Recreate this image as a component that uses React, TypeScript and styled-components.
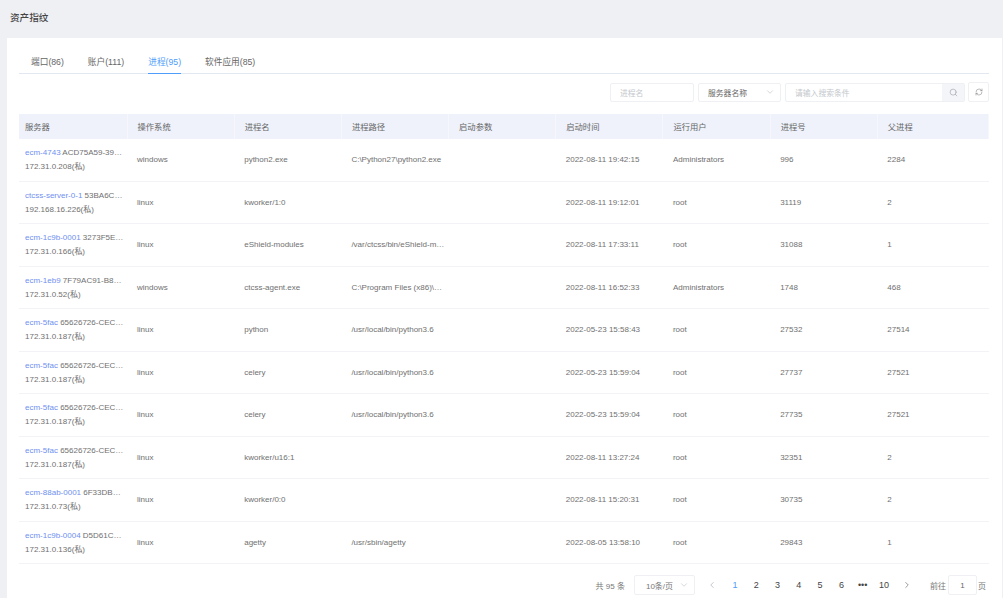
import styled, { createGlobalStyle } from 'styled-components'
import { ChevronDown, ChevronLeft, ChevronRight, RefreshCw, Search } from 'lucide-react'

const GlobalStyle = createGlobalStyle`
  html, body {
    margin: 0;
    height: 100%;
    overflow: hidden;
    background: #eff0f4;
  }
  * {
    box-sizing: border-box;
  }
  body {
    font-family: "Liberation Sans", "Noto Sans CJK SC", sans-serif;
    font-size: 8px;
    color: #666;
  }
`

const Page = styled.div`
  height: 598px;
  display: flex;
  flex-direction: column;
  padding: 0 1px 0 7px;
`

const PageTitle = styled.h1`
  height: 38px;
  margin: 0 0 0 3px;
  padding-top: 11px;
  font-size: 9.6px;
  line-height: 14px;
  font-weight: 500;
  color: #444;
`

const Card = styled.main`
  flex: 1;
  background: #fff;
  padding: 12px 13px 0 12px;
`

const Tabs = styled.nav`
  display: flex;
  height: 24px;
  border-bottom: 1px solid #e3e8f0;
`

const Tab = styled.a<{ $active?: boolean; $gap: number }>`
  height: 24px;
  margin-left: ${({ $gap }) => $gap}px;
  padding-top: 6px;
  font-size: 8.7px;
  line-height: 12px;
  color: ${({ $active }) => ($active ? '#4e9dfb' : '#666')};
  border-bottom: 1px solid ${({ $active }) => ($active ? '#4e9dfb' : 'transparent')};
`

const Toolbar = styled.div`
  height: 40px;
  display: flex;
  justify-content: flex-end;
  align-items: center;
  gap: 4px;
  padding-bottom: 3px;
`

const Field = styled.div<{ $width: number }>`
  width: ${({ $width }) => $width}px;
  height: 19px;
  display: flex;
  align-items: center;
  justify-content: space-between;
  padding-left: 9px;
  border: 1px solid #eef0f3;
  border-radius: 2px;
  background: #fff;
  overflow: hidden;
`

const Placeholder = styled.span`
  color: #c4c7cc;
  font-size: 7.8px;
`

const SelectText = styled.span`
  color: #666;
  font-size: 7.8px;
`

const SelectArrow = styled(ChevronDown)`
  width: 10px;
  height: 10px;
  margin-right: 5px;
  color: #b8bbc1;
  stroke-width: 1.4;
`

const SearchButton = styled.span`
  width: 22px;
  height: 100%;
  display: flex;
  align-items: center;
  justify-content: center;
  background: #f3f5f9;
  color: #8d929a;
`

const RefreshButton = styled.span`
  width: 21px;
  height: 20px;
  margin-left: -1px;
  display: flex;
  align-items: center;
  justify-content: center;
  border: 1px solid #eef0f3;
  border-radius: 2px;
  color: #777;
`

const Table = styled.table`
  width: 970px;
  table-layout: fixed;
  border-collapse: collapse;
`

const HeadCell = styled.th<{ $first?: boolean; $width?: number }>`
  width: ${({ $width }) => ($width ? `${$width}px` : 'auto')};
  height: 25px;
  padding: 0 0 0 ${({ $first }) => ($first ? 6 : 10)}px;
  background: #eff2fb;
  border-right: 1px solid #f5f7fc;
  text-align: left;
  font-size: 8.3px;
  font-weight: 400;
  color: #666;
`

const Row = styled.tr`
  height: 42.5px;
  border-bottom: 1px solid #f2f3f6;
`

const Cell = styled.td`
  padding: 0 4px 0 10px;
  font-size: 8px;
  color: #707070;
  white-space: nowrap;
  overflow: hidden;
  text-overflow: ellipsis;
`

const ServerCell = styled(Cell)`
  padding: 1px 0 0 6px;
  line-height: 14px;
`

const ServerName = styled.div`
  width: 99px;
  white-space: nowrap;
  overflow: hidden;
  text-overflow: ellipsis;
`

const ServerLink = styled.a`
  color: #6f8ff0;
`

const Footer = styled.footer`
  height: 34px;
  display: flex;
  justify-content: flex-end;
  align-items: center;
  padding: 8px 3px 0 0;
  font-size: 8px;
  color: #777;
`

const Total = styled.span`
  margin-right: 9px;
`

const PageSize = styled.div`
  width: 61px;
  height: 20px;
  display: flex;
  align-items: center;
  justify-content: space-between;
  padding-left: 11px;
  margin-right: 6px;
  border: 1px solid #eef0f3;
  border-radius: 2px;
  color: #777;
`

const PageItem = styled.span<{ $active?: boolean; $nav?: boolean }>`
  width: 21.3px;
  display: flex;
  align-items: center;
  justify-content: center;
  font-size: 9px;
  font-weight: ${({ $active }) => ($active ? 400 : 500)};
  color: ${({ $active, $nav }) => ($active ? '#4e9dfb' : $nav ? '#9a9ea6' : '#444')};
`

const PrevItem = styled(PageItem)`
  margin-right: 2px;
`

const NextItem = styled(PageItem)`
  color: #555;
  margin: 0 12.4px 0 1.7px;
`

const JumpInput = styled.span`
  width: 29px;
  height: 20px;
  margin: 0 1px 0 2px;
  display: flex;
  align-items: center;
  justify-content: center;
  border: 1px solid #eef0f3;
  border-radius: 2px;
  color: #666;
`

const tabs = [
  { label: '端口(86)', gap: 12 },
  { label: '账户(111)', gap: 24 },
  { label: '进程(95)', gap: 24, active: true },
  { label: '软件应用(85)', gap: 24 },
]

const columns = ['服务器', '操作系统', '进程名', '进程路径', '启动参数', '启动时间', '运行用户', '进程号', '父进程']

const rows = [
  ['ecm-4743', 'ACD75A59-39F4-4C2E', '172.31.0.208(私)', 'windows', 'python2.exe', 'C:\\Python27\\python2.exe', '2022-08-11 19:42:15', 'Administrators', '996', '2284'],
  ['ctcss-server-0-1', '53BA6C21-77AB', '192.168.16.226(私)', 'linux', 'kworker/1:0', '', '2022-08-11 19:12:01', 'root', '31119', '2'],
  ['ecm-1c9b-0001', '3273F5E8-11C0', '172.31.0.166(私)', 'linux', 'eShield-modules', '/var/ctcss/bin/eShield-modules', '2022-08-11 17:33:11', 'root', '31088', '1'],
  ['ecm-1eb9', '7F79AC91-B8D2-4A17', '172.31.0.52(私)', 'windows', 'ctcss-agent.exe', 'C:\\Program Files (x86)\\ctcss\\agent.exe', '2022-08-11 16:52:33', 'Administrators', '1748', '468'],
  ['ecm-5fac', '65626726-CEC1-4D02', '172.31.0.187(私)', 'linux', 'python', '/usr/local/bin/python3.6', '2022-05-23 15:58:43', 'root', '27532', '27514'],
  ['ecm-5fac', '65626726-CEC1-4D02', '172.31.0.187(私)', 'linux', 'celery', '/usr/local/bin/python3.6', '2022-05-23 15:59:04', 'root', '27737', '27521'],
  ['ecm-5fac', '65626726-CEC1-4D02', '172.31.0.187(私)', 'linux', 'celery', '/usr/local/bin/python3.6', '2022-05-23 15:59:04', 'root', '27735', '27521'],
  ['ecm-5fac', '65626726-CEC1-4D02', '172.31.0.187(私)', 'linux', 'kworker/u16:1', '', '2022-08-11 13:27:24', 'root', '32351', '2'],
  ['ecm-88ab-0001', '6F33DB90-2A1C', '172.31.0.73(私)', 'linux', 'kworker/0:0', '', '2022-08-11 15:20:31', 'root', '30735', '2'],
  ['ecm-1c9b-0004', 'D5D61C47-90EE', '172.31.0.136(私)', 'linux', 'agetty', '/usr/sbin/agetty', '2022-08-05 13:58:10', 'root', '29843', '1'],
]

const pages = ['1', '2', '3', '4', '5', '6', '•••', '10']

const columnWidth = (index: number) => {
  if (index === 0) return 108
  return index === columns.length - 1 ? undefined : 107.2
}

const App = () => {
  return (
    <Page>
      <GlobalStyle />
      <PageTitle>资产指纹</PageTitle>
      <Card>
        <Tabs>
          {tabs.map((tab) => (
            <Tab key={tab.label} $gap={tab.gap} $active={tab.active}>
              {tab.label}
            </Tab>
          ))}
        </Tabs>
        <Toolbar>
          <Field $width={84}>
            <Placeholder>进程名</Placeholder>
          </Field>
          <Field $width={83}>
            <SelectText>服务器名称</SelectText>
            <SelectArrow />
          </Field>
          <Field $width={180}>
            <Placeholder>请输入搜索条件</Placeholder>
            <SearchButton>
              <Search size={9} strokeWidth={1.4} />
            </SearchButton>
          </Field>
          <RefreshButton>
            <RefreshCw size={8} strokeWidth={1.5} />
          </RefreshButton>
        </Toolbar>
        <Table>
          <thead>
            <tr>
              {columns.map((column, index) => (
                <HeadCell key={column} $first={index === 0} $width={columnWidth(index)}>
                  {column}
                </HeadCell>
              ))}
            </tr>
          </thead>
          <tbody>
            {rows.map(([name, id, ip, os, proc, path, time, user, pid, ppid], index) => (
              <Row key={index}>
                <ServerCell>
                  <ServerName>
                    <ServerLink>{name}</ServerLink> {id}
                  </ServerName>
                  <div>{ip}</div>
                </ServerCell>
                <Cell>{os}</Cell>
                <Cell>{proc}</Cell>
                <Cell>{path}</Cell>
                <Cell />
                <Cell>{time}</Cell>
                <Cell>{user}</Cell>
                <Cell>{pid}</Cell>
                <Cell>{ppid}</Cell>
              </Row>
            ))}
          </tbody>
        </Table>
        <Footer>
          <Total>共 95 条</Total>
          <PageSize>
            10条/页
            <SelectArrow />
          </PageSize>
          <PrevItem $nav>
            <ChevronLeft size={10} strokeWidth={1.4} />
          </PrevItem>
          {pages.map((page) => (
            <PageItem key={page} $active={page === '1'}>
              {page}
            </PageItem>
          ))}
          <NextItem>
            <ChevronRight size={10} strokeWidth={1.4} />
          </NextItem>
          前往
          <JumpInput>1</JumpInput>页
        </Footer>
      </Card>
    </Page>
  )
}

export default App
